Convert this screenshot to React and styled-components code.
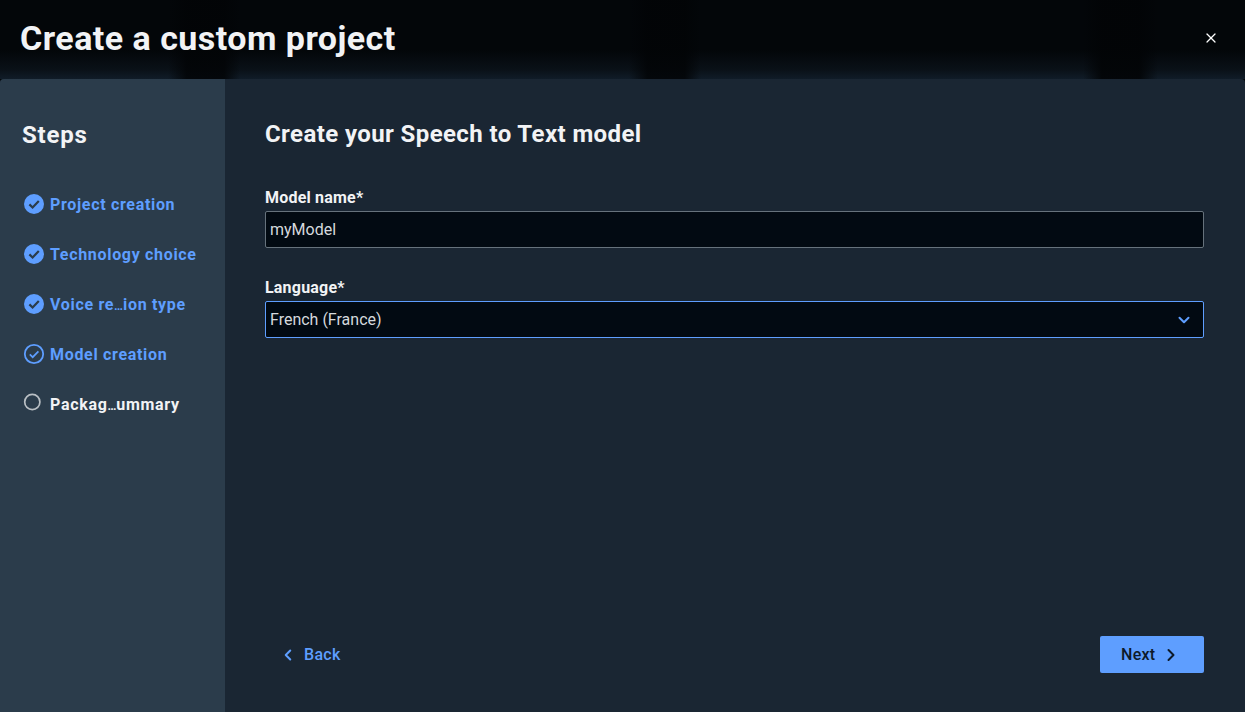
import React from 'react'
import styled, {createGlobalStyle} from 'styled-components'
import {ChevronDown, ChevronLeft, ChevronRight, X} from 'lucide-react'

const GlobalStyle = createGlobalStyle`
    html, body {
        margin : 0;
        padding : 0;
        height : 100%;
        background : #030609;
    }
    body {
        font-family : Roboto, "Liberation Sans", sans-serif;
        overflow : hidden;
    }
    #root {
        height : 100%;
    }
`

const Page = styled.div`
    display : flex;
    flex-direction : column;
    height : 712px;
    width : 1245px;
`

const Header = styled.header`
    flex : 0 0 79px;
    display : flex;
    align-items : center;
    justify-content : space-between;
    padding : 0 26px 4px 20px;
    box-sizing : border-box;
    background :
        linear-gradient(90deg,
            rgba(3,6,9,0) 0, rgba(3,6,9,0) 13.5%, rgba(2,4,6,.85) 15%, rgba(2,4,6,.85) 18%, rgba(3,6,9,0) 19.3%,
            rgba(3,6,9,0) 50.5%, rgba(2,4,6,.85) 52%, rgba(2,4,6,.85) 55%, rgba(3,6,9,0) 56.3%,
            rgba(3,6,9,0) 87%, rgba(2,4,6,.9) 88.5%, rgba(2,4,6,.9) 91.5%, rgba(3,6,9,0) 93%),
        linear-gradient(180deg, #030609 0, #030609 50px, #0a1118 70px, #101c28 79px);
`

const HeaderTitle = styled.h1`
    margin : 0;
    font-size : 34px;
    line-height : 40px;
    font-weight : 700;
    letter-spacing : 0.47px;
    color : #f2f3f5;
`

const CloseButton = styled.button`
    display : flex;
    padding : 0;
    border : none;
    background : none;
    color : #ffffff;
`

const Dialog = styled.div`
    flex : 1;
    display : flex;
    min-height : 0;
    border-radius : 4px 4px 0 0;
    overflow : hidden;
    background : #1a2633;
`

const Sidebar = styled.aside`
    flex : 0 0 225px;
    box-sizing : border-box;
    padding : 41px 0 0 22px;
    background : #2b3c4b;
`

const SidebarTitle = styled.h2`
    margin : 0 0 42px;
    font-size : 24px;
    line-height : 30px;
    font-weight : 700;
    letter-spacing : 0.8px;
    color : #f2f3f5;
`

const StepList = styled.ol`
    display : flex;
    flex-direction : column;
    gap : 26px;
    margin : 0;
    padding : 0;
    list-style : none;
`

const Step = styled.li`
    display : flex;
    align-items : center;
    gap : 5px;
    height : 24px;
    font-size : 16px;
    font-weight : 700;
    letter-spacing : 0.68px;
    white-space : nowrap;
    color : ${props => props.$pending ? '#f2f3f5' : '#5e9eff'};
`

const StepLabel = styled.span`
    display : block;
`

const Ellipsis = styled.span`
    font-size : 12px;
    letter-spacing : 0;
`

const StepIcon = styled.svg`
    flex : none;
    width : 22px;
    height : 22px;
    margin : ${props => props.$pending ? '-4px 1px 0 0' : '-1px 0 0 1px'};
`

const Main = styled.main`
    flex : 1;
    display : flex;
    flex-direction : column;
    box-sizing : border-box;
    padding : 40px 41px 39px 40px;
`

const MainTitle = styled.h2`
    margin : 0 0 39px;
    font-size : 24px;
    line-height : 30px;
    font-weight : 700;
    letter-spacing : 0.4px;
    color : #f2f3f5;
`

const Field = styled.div`
    display : flex;
    flex-direction : column;
    gap : 3px;
    margin-bottom : 30px;
`

const Label = styled.label`
    font-size : 16px;
    line-height : 20px;
    font-weight : 700;
    letter-spacing : 0.2px;
    color : #f2f3f5;
`

const Input = styled.input`
    box-sizing : border-box;
    width : 100%;
    height : 37px;
    padding : 0 4px;
    border : 1px solid #66727c;
    border-radius : 2px;
    outline : none;
    background : #020a12;
    font-family : inherit;
    font-size : 16px;
    color : #d5d9dd;
`

const Select = styled.div`
    display : flex;
    align-items : center;
    justify-content : space-between;
    box-sizing : border-box;
    height : 37px;
    padding : 0 10px 0 4px;
    border : 1px solid #5e9eff;
    border-radius : 2px;
    background : #020a12;
    font-size : 16px;
    color : #d5d9dd;
`

const Footer = styled.div`
    display : flex;
    align-items : center;
    justify-content : space-between;
    margin-top : auto;
`

const BackButton = styled.button`
    display : flex;
    align-items : center;
    gap : 7px;
    height : 37px;
    padding : 0 0 0 14px;
    border : none;
    background : none;
    font-family : inherit;
    font-size : 16px;
    font-weight : 500;
    letter-spacing : 0.3px;
    color : #5e9eff;
`

const NextButton = styled.button`
    display : flex;
    align-items : center;
    gap : 5px;
    box-sizing : border-box;
    width : 104px;
    height : 37px;
    padding : 0 0 0 21px;
    border : none;
    border-radius : 2px;
    background : #5e9eff;
    font-family : inherit;
    font-size : 16px;
    font-weight : 500;
    letter-spacing : 0.3px;
    color : #0d1a29;
`

const DoneIcon = () => (
    <StepIcon viewBox="0 0 22 22">
        <circle cx="11" cy="11" r="10" fill="#5e9eff"/>
        <path d="M6.4 11.4 L9.6 14.5 L15.8 8" fill="none" stroke="#2b3c4b" strokeWidth="2.2"/>
    </StepIcon>
)

const CurrentIcon = () => (
    <StepIcon viewBox="0 0 22 22">
        <circle cx="11" cy="11" r="9.2" fill="none" stroke="#5e9eff" strokeWidth="1.8"/>
        <path d="M6.8 11.4 L9.7 14.2 L15.4 8.3" fill="none" stroke="#5e9eff" strokeWidth="1.7"/>
    </StepIcon>
)

const PendingIcon = () => (
    <StepIcon $pending viewBox="0 0 22 22">
        <circle cx="10.3" cy="11" r="7.6" fill="none" stroke="#b9bfc4" strokeWidth="1.7"/>
    </StepIcon>
)

const steps = [
    {id : 'project', label : 'Project creation', icon : <DoneIcon/>},
    {id : 'technology', label : 'Technology choice', icon : <DoneIcon/>},
    {id : 'voice', label : <>Voice re<Ellipsis>…</Ellipsis>ion type</>, icon : <DoneIcon/>},
    {id : 'model', label : 'Model creation', icon : <CurrentIcon/>},
    {id : 'summary', label : <>Packag<Ellipsis>…</Ellipsis>ummary</>, icon : <PendingIcon/>, pending : true}
]

const App = () => (
    <Page>
        <GlobalStyle/>
        <Header>
            <HeaderTitle>Create a custom project</HeaderTitle>
            <CloseButton aria-label="Close"><X size={16} strokeWidth={1.8}/></CloseButton>
        </Header>
        <Dialog>
            <Sidebar>
                <SidebarTitle>Steps</SidebarTitle>
                <StepList>
                    {steps.map(step => (
                        <Step key={step.id} $pending={step.pending}>
                            {step.icon}
                            <StepLabel>{step.label}</StepLabel>
                        </Step>
                    ))}
                </StepList>
            </Sidebar>
            <Main>
                <MainTitle>Create your Speech to Text model</MainTitle>
                <Field>
                    <Label>Model name*</Label>
                    <Input defaultValue="myModel"/>
                </Field>
                <Field>
                    <Label>Language*</Label>
                    <Select>
                        French (France)
                        <ChevronDown size={18} strokeWidth={2.7} color="#5e9eff"/>
                    </Select>
                </Field>
                <Footer>
                    <BackButton><ChevronLeft size={18} strokeWidth={2.7}/>Back</BackButton>
                    <NextButton>Next<ChevronRight size={20} strokeWidth={2.4}/></NextButton>
                </Footer>
            </Main>
        </Dialog>
    </Page>
)

export default App
